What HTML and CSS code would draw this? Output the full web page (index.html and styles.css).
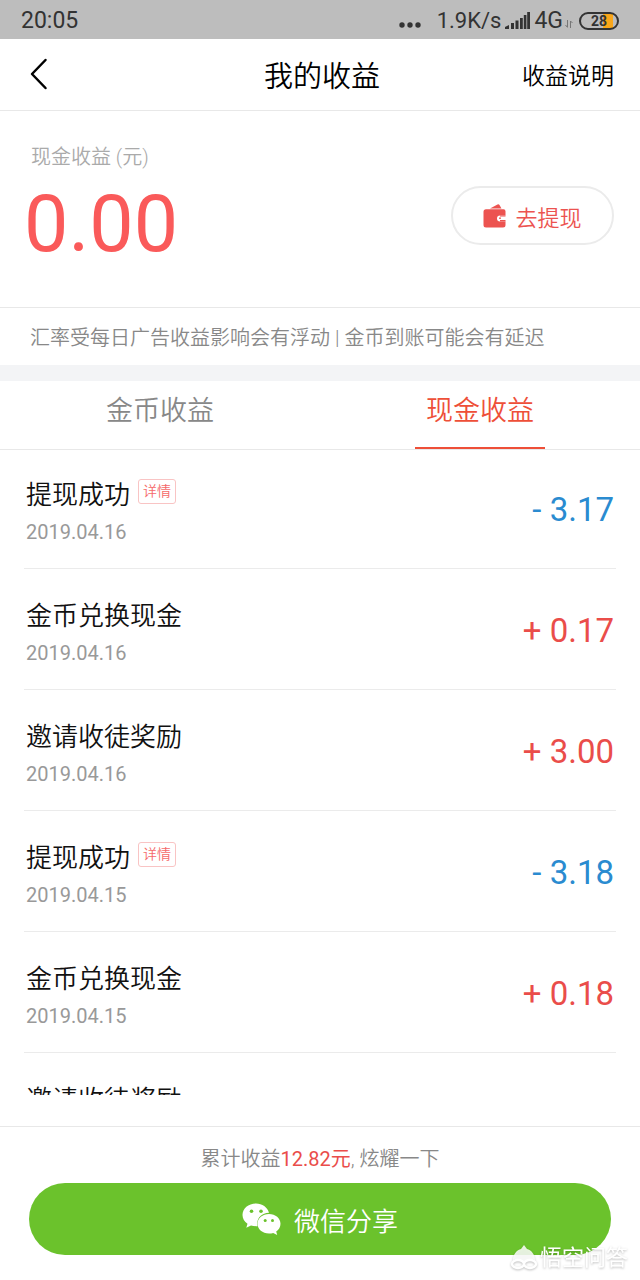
FILE: index.html
```html
<!DOCTYPE html>
<html lang="zh-CN">
<head>
    <meta charset="UTF-8">
    <meta name="viewport" content="width=device-width, initial-scale=1.0">
    <title>我的收益</title>
    <link rel="stylesheet" href="styles.css">
</head>
<body>

    <!-- Status bar -->
    <div class="status-bar">
        <span class="time">20:05</span>
        <svg class="dots" width="22" height="6" viewBox="0 0 22 6" fill="#333"><circle cx="3" cy="3" r="2.7"/><circle cx="11" cy="3" r="2.7"/><circle cx="19" cy="3" r="2.7"/></svg>
        <span class="speed">1.9K/s</span>
        <svg class="signal" width="25" height="17" viewBox="0 0 25 17" fill="#333"><path d="M0 17v-2l4-2v4zM6 11h3v6H6zM10.500 8.500h3V17h-3zM15 6h2.800v11H15zM18.800 3h2.600v14h-2.600zM22.200 0H25v17h-2.800z"/></svg>
        <span class="network">4G</span>
        <svg class="data" width="8" height="8" viewBox="0 0 8 8" fill="none" stroke="#777"><path d="M2.500 0v7M.5 5l2 2.500M5.500 8V1l2 2"/></svg>
        <span class="battery">28</span>
    </div>

    <!-- Header -->
    <header class="header">
        <button class="back" aria-label="返回">
            <svg width="18" height="32" viewBox="0 0 18 32" fill="none" stroke="#000" stroke-width="2.500" stroke-linecap="round" stroke-linejoin="round"><path d="M15.500 2L2 16l13.500 14"/></svg>
        </button>
        <h1>我的收益</h1>
        <a class="explain" href="#">收益说明</a>
    </header>

    <!-- Cash balance -->
    <section class="balance">
        <div>
            <div class="balance-label">现金收益 (元)</div>
            <div class="balance-value">0.00</div>
        </div>
        <button class="withdraw">
            <svg width="24" height="24" viewBox="0 0 24 24" fill="#ec5350"><path d="M7 4.500L14.500.6a1.500 1.500 0 0 1 2 .5L18.500 4.500z"/><path d="M3 5.200h17.500a2 2 0 0 1 2 2v4.300H17a3 3 0 0 0 0 6h5.500V21a2.500 2.500 0 0 1-2.500 2.500H3A2.500 2.500 0 0 1 .5 21V7.700A2.500 2.500 0 0 1 3 5.200z"/><path d="M17 11.500h5.500v6H17z"/><path d="M16.500 12.500h6.500v3.500h-6.500a1.750 1.750 0 0 1 0-3.500z" fill="#fff"/><circle cx="17" cy="14.200" r=".9"/></svg>
            去提现
        </button>
    </section>
    <p class="notice">汇率受每日广告收益影响会有浮动<span class="divider">|</span>金币到账可能会有延迟</p>

    <!-- Tabs -->
    <nav class="tabs">
        <button class="tab">金币收益</button>
        <button class="tab active">现金收益</button>
    </nav>

    <!-- Records -->
    <ul class="records">
        <li class="record">
            <div>
                <div class="record-title">提现成功<a class="tag" href="#">详情</a></div>
                <div class="record-date">2019.04.16</div>
            </div>
            <span class="amount minus">- 3.17</span>
        </li>
        <li class="record">
            <div>
                <div class="record-title">金币兑换现金</div>
                <div class="record-date">2019.04.16</div>
            </div>
            <span class="amount">+ 0.17</span>
        </li>
        <li class="record">
            <div>
                <div class="record-title">邀请收徒奖励</div>
                <div class="record-date">2019.04.16</div>
            </div>
            <span class="amount">+ 3.00</span>
        </li>
        <li class="record">
            <div>
                <div class="record-title">提现成功<a class="tag" href="#">详情</a></div>
                <div class="record-date">2019.04.15</div>
            </div>
            <span class="amount minus">- 3.18</span>
        </li>
        <li class="record">
            <div>
                <div class="record-title">金币兑换现金</div>
                <div class="record-date">2019.04.15</div>
            </div>
            <span class="amount">+ 0.18</span>
        </li>
        <li class="record">
            <div>
                <div class="record-title">邀请收徒奖励</div>
            </div>
        </li>
    </ul>

    <!-- Share -->
    <footer class="footer">
        <p class="total">累计收益<span class="total-value">12.82元</span>, 炫耀一下</p>
        <button class="share">
            <svg width="40" height="32" viewBox="0 0 40 32"><path fill="#fff" d="M14 .5C6.300.5.500 5.600.500 12c0 3.600 1.900 6.700 5 8.800L4.300 24.800l4.700-2.300c1.600.5 3.300.7 5 .7h1.500C14 16 19 10 27 9.800 25.500 4.300 20.200.5 14 .5z"/><path fill="#fff" d="M27 11c-6.500 0-11.500 4.300-11.500 9.800s5 9.700 11.500 9.700c1.500 0 3-.2 4.200-.6l4 2.100-1-3.500c2.700-1.800 4.300-4.500 4.300-7.700C38.500 15.300 33.500 11 27 11z"/><g fill="#6bc22c"><circle cx="9.500" cy="8.300" r="1.800"/><circle cx="19" cy="8.300" r="1.800"/><circle cx="23.200" cy="17.500" r="1.500"/><circle cx="30.500" cy="17.500" r="1.500"/></g></svg>
            微信分享
        </button>
    </footer>

    <div class="watermark">
        <svg width="28" height="26" viewBox="0 0 28 26"><path fill="#fff" fill-opacity=".85" d="M3 15C3 9 7 5 11 4l3-4 3 4c4 1 8 5 8 11l-5-1-6 3-6-3z"/><g fill="none" stroke="#fff" stroke-width="2.500"><ellipse cx="8" cy="19" rx="6" ry="4"/><ellipse cx="20" cy="19" rx="6" ry="4"/></g></svg>
        悟空问答
    </div>

</body>
</html>
```
FILE: styles.css
```css
* {
    box-sizing: border-box;
}
body {
    display: flex;
    flex-direction: column;
    height: 100vh;
    margin: 0;
    position: relative;
    overflow: hidden;
    background-color: #fff;
    color: #222;
    font-family: Roboto, "Noto Sans CJK SC", sans-serif;
    font-weight: 350;
}
button {
    padding: 0;
    border: none;
    background: none;
    font: inherit;
    cursor: pointer;
}
a {
    color: inherit;
    text-decoration: none;
}
svg {
    flex: none;
}

/* Status bar */
.status-bar {
    display: flex;
    flex: none;
    align-items: center;
    height: 39px;
    padding: 2px 21px 0;
    background-color: #bdbdbd;
    color: #333;
    font-size: 23px;
    font-weight: 400;
}
.time {
    margin-right: auto;
}
.dots {
    margin: 8px 16px 0 0;
}
.speed {
    font-size: 22px;
}
.signal {
    margin: 0 4px;
}
.data {
    margin: 6px 6px 0 2px;
}
.battery {
    width: 40px;
    height: 18px;
    border: 2px solid #333;
    border-radius: 9px;
    background: linear-gradient(to right, transparent 60%, #f9a61a 60%, #f9a61a 90%, transparent 90%);
    font-size: 14px;
    font-weight: 700;
    line-height: 14px;
    text-align: center;
}

/* Header */
.header {
    display: grid;
    grid-template-columns: 1fr auto 1fr;
    flex: none;
    align-items: center;
    height: 72px;
    padding: 0 26px 2px 30px;
    border-bottom: 1px solid #e8e8e8;
    color: #000;
}
.back {
    display: flex;
    width: 40px;
}
.header h1 {
    margin: 0;
    font-size: 29px;
    font-weight: inherit;
}
.explain {
    justify-self: end;
    font-size: 23px;
}

/* Cash balance */
.balance {
    display: flex;
    flex: none;
    justify-content: space-between;
    align-items: flex-start;
    height: 196px;
    padding: 31px 26px 0 24px;
}
.balance-label {
    padding-left: 7px;
    color: #aaa;
    font-size: 20px;
    line-height: 30px;
}
.balance-value {
    margin-top: 4px;
    color: #fa5a5a;
    font-size: 79px;
    font-weight: 400;
    line-height: 96px;
}
.withdraw {
    display: flex;
    justify-content: center;
    align-items: center;
    gap: 8px;
    width: 163px;
    height: 59px;
    margin-top: 44px;
    border: 2px solid #ebebeb;
    border-radius: 30px;
    color: #ec5350;
    font-size: 22px;
}
.notice {
    flex: none;
    height: 74px;
    margin: 0;
    padding: 0 30px;
    border-top: 1px solid #e8e8e8;
    border-bottom: 16px solid #f3f4f6;
    color: #888;
    font-size: 20px;
    line-height: 60px;
    white-space: nowrap;
}
.divider {
    margin: 0 5px;
}

/* Tabs */
.tabs {
    display: flex;
    flex: none;
    justify-content: space-around;
    height: 69px;
    border-bottom: 1px solid #e8e8e8;
}
.tab {
    width: 130px;
    padding-bottom: 12px;
    border-bottom: 2px solid transparent;
    color: #888;
    font-size: 27px;
}
.tab.active {
    border-bottom-color: #ee4f38;
    color: #ee4f38;
}

/* Records */
.records {
    flex: 1;
    min-height: 0;
    margin: 0 24px 31px;
    padding: 0;
    overflow: hidden;
    list-style: none;
}
.record {
    display: flex;
    justify-content: space-between;
    height: 121px;
    padding: 28px 2px 0;
    border-bottom: 1px solid #ebebeb;
}
.record:first-child {
    height: 119px;
    padding-top: 26px;
}
.record-title {
    display: flex;
    align-items: center;
    color: #111;
    font-size: 26px;
    line-height: 38px;
}
.tag {
    height: 25px;
    margin: 0 0 8px 8px;
    padding: 0 4px;
    border: 1px solid #f9c4c4;
    border-radius: 3px;
    color: #f56a6a;
    font-size: 14px;
    line-height: 22px;
}
.record-date {
    margin-top: 6px;
    color: #999;
    font-size: 20px;
    font-weight: 400;
    line-height: 24px;
}
.amount {
    margin-top: 14px;
    color: #ea4d4a;
    font-size: 33px;
    font-weight: 400;
    line-height: 40px;
}
.minus {
    color: #2a8bd0;
}

/* Share */
.footer {
    flex: none;
    padding: 16px 29px 25px;
    border-top: 1px solid #e8e8e8;
}
.total {
    margin: 0 0 8px;
    color: #888;
    font-size: 20px;
    line-height: 32px;
    text-align: center;
}
.total-value {
    color: #ea4d4a;
    font-weight: 400;
}
.share {
    display: flex;
    justify-content: center;
    align-items: center;
    gap: 12px;
    width: 100%;
    height: 72px;
    border-radius: 36px;
    background-color: #6bc22c;
    color: #fff;
    font-size: 26px;
}
.watermark {
    display: flex;
    position: absolute;
    right: 12px;
    bottom: 8px;
    align-items: center;
    gap: 2px;
    color: #fff;
    font-size: 22px;
    font-weight: 400;
    line-height: 28px;
    filter: drop-shadow(0 1px 1px rgba(0, 0, 0, 0.25));
}
```
